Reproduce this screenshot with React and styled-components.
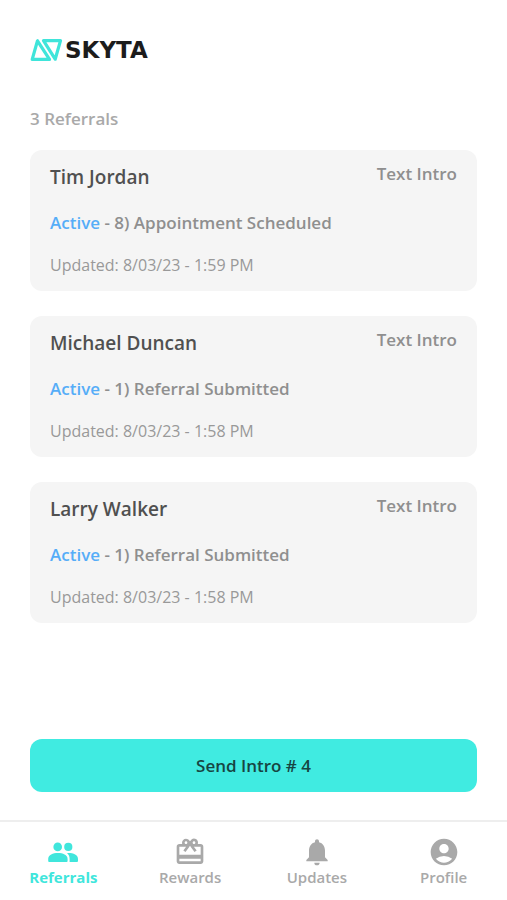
import React, { useState } from 'react';
import styled, { createGlobalStyle } from 'styled-components';
import {
  MdOutlineRedeem,
  MdNotifications,
  MdAccountCircle,
} from 'react-icons/md';

const GlobalStyle = createGlobalStyle`
  * {
    box-sizing: border-box;
  }
  body {
    margin: 0;
    background-color: #ffffff;
    font-family: 'Open Sans', 'Noto Sans', sans-serif;
  }
  h1, h2, p, ul {
    margin: 0;
    padding: 0;
  }
`;

const StyledWrapper = styled.div`
  display: flex;
  flex-direction: column;
  min-height: 100vh;
`;

const StyledMain = styled.main`
  display: flex;
  flex: 1;
  flex-direction: column;
  padding: 36px 30px 28px;
`;

const StyledLogo = styled.a`
  display: flex;
  align-items: center;
  align-self: flex-start;
  gap: 2px;
  height: 28px;
  color: #1c1c1c;
  text-decoration: none;
`;

const StyledWordmark = styled.span`
  font-family: 'DejaVu Sans', sans-serif;
  font-size: 23px;
  font-weight: 700;
  line-height: 28px;
`;

const StyledCount = styled.h1`
  margin-top: 43px;
  color: #a9a9a9;
  font-size: 17px;
  font-weight: 600;
  line-height: 24px;
`;

const StyledList = styled.ul`
  display: flex;
  flex-direction: column;
  gap: 25px;
  margin-top: 19px;
  margin-bottom: 25px;
  list-style: none;
`;

const StyledCard = styled.li`
  padding: 12px 20px 14px;
  border-radius: 12px;
  background-color: #f5f5f5;
`;

const StyledCardHeader = styled.div`
  display: flex;
  align-items: flex-start;
  justify-content: space-between;
`;

const StyledName = styled.h2`
  color: #505050;
  font-size: 19px;
  font-weight: 600;
  line-height: 30px;
`;

const StyledType = styled.span`
  color: #8f8f8f;
  font-size: 17px;
  font-weight: 600;
  line-height: 24px;
`;

const StyledStatus = styled.p`
  margin-top: 19px;
  color: #8f8f8f;
  font-size: 17px;
  font-weight: 600;
  line-height: 24px;
`;

const StyledState = styled.span`
  color: #55adf8;
`;

const StyledUpdated = styled.p`
  margin-top: 18px;
  color: #999999;
  font-size: 16px;
  line-height: 24px;
`;

const StyledSendButton = styled.button`
  height: 53px;
  margin-top: auto;
  border: none;
  border-radius: 12px;
  background-color: #40ebe1;
  color: #174542;
  font-family: inherit;
  font-size: 17px;
  font-weight: 600;
  cursor: pointer;
`;

const StyledNav = styled.nav`
  display: grid;
  grid-template-columns: repeat(4, 1fr);
  height: 80px;
  border-top: 2px solid #eeeeee;
`;

const StyledNavLink = styled.a`
  display: flex;
  flex-direction: column;
  align-items: center;
  padding-top: 14px;
  color: ${props => (props.$active ? '#40e6dc' : '#a9a9a9')};
  font-size: 15px;
  font-weight: ${props => (props.$active ? 700 : 600)};
  line-height: 18px;
  text-decoration: none;
`;

const Logo = () => (
  <StyledLogo href="#home" aria-label="Skyta">
    <svg width="33" height="24" viewBox="0 0 33 24" aria-hidden="true">
      <g
        fill="none"
        stroke="#3fe5da"
        strokeWidth="3.2"
        strokeLinejoin="round"
      >
        <path d="M7.500 2.800L2.200 21.400H19.500Z" />
        <path d="M13.500 2.600H30.500L25.200 21.200Z" />
      </g>
    </svg>
    <StyledWordmark>SKYTA</StyledWordmark>
  </StyledLogo>
);

const PeopleIcon = ({ size }) => (
  <svg
    width={size}
    height={size}
    viewBox="0 0 32 32"
    fill="currentColor"
    aria-hidden="true"
  >
    <circle cx="10.700" cy="10.900" r="4.300" />
    <circle cx="21.300" cy="10.900" r="4.100" />
    <path d="M1.200 23C1.200 18.800 6 17 10.900 17S20.600 18.800 20.600 23V25Q20.600 26 19.600 26H2.200Q1.200 26 1.200 25Z" />
    <path d="M20 17.100C26 16.800 31 18.800 31 23V25Q31 26 30 26H22.600V23C22.600 20.300 21.700 18.500 20 17.100Z" />
  </svg>
);

const Referral = ({ referral }) => (
  <StyledCard>
    <StyledCardHeader>
      <StyledName>{referral.name}</StyledName>
      <StyledType>Text Intro</StyledType>
    </StyledCardHeader>
    <StyledStatus>
      <StyledState>Active</StyledState> - {referral.step}
    </StyledStatus>
    <StyledUpdated>Updated: {referral.updated}</StyledUpdated>
  </StyledCard>
);

const navItems = [
  { title: 'Referrals', icon: PeopleIcon },
  { title: 'Rewards', icon: MdOutlineRedeem },
  { title: 'Updates', icon: MdNotifications },
  { title: 'Profile', icon: MdAccountCircle },
];

const App = () => {
  const [activeTab, setActiveTab] = useState('Referrals');
  const [referrals] = useState([
    {
      name: 'Tim Jordan',
      step: '8) Appointment Scheduled',
      updated: '8/03/23 - 1:59 PM',
    },
    {
      name: 'Michael Duncan',
      step: '1) Referral Submitted',
      updated: '8/03/23 - 1:58 PM',
    },
    {
      name: 'Larry Walker',
      step: '1) Referral Submitted',
      updated: '8/03/23 - 1:58 PM',
    },
  ]);

  return (
    <StyledWrapper>
      <GlobalStyle />
      <StyledMain>
        <Logo />
        <StyledCount>{referrals.length} Referrals</StyledCount>
        <StyledList>
          {referrals.map(referral => (
            <Referral key={referral.name} referral={referral} />
          ))}
        </StyledList>
        <StyledSendButton type="button">
          Send Intro # {referrals.length + 1}
        </StyledSendButton>
      </StyledMain>
      <StyledNav>
        {navItems.map(({ title, icon: Icon }) => (
          <StyledNavLink
            key={title}
            href={`#${title.toLowerCase()}`}
            $active={title === activeTab}
            onClick={() => setActiveTab(title)}
          >
            <Icon size={32} aria-hidden="true" />
            {title}
          </StyledNavLink>
        ))}
      </StyledNav>
    </StyledWrapper>
  );
};

export default App;
